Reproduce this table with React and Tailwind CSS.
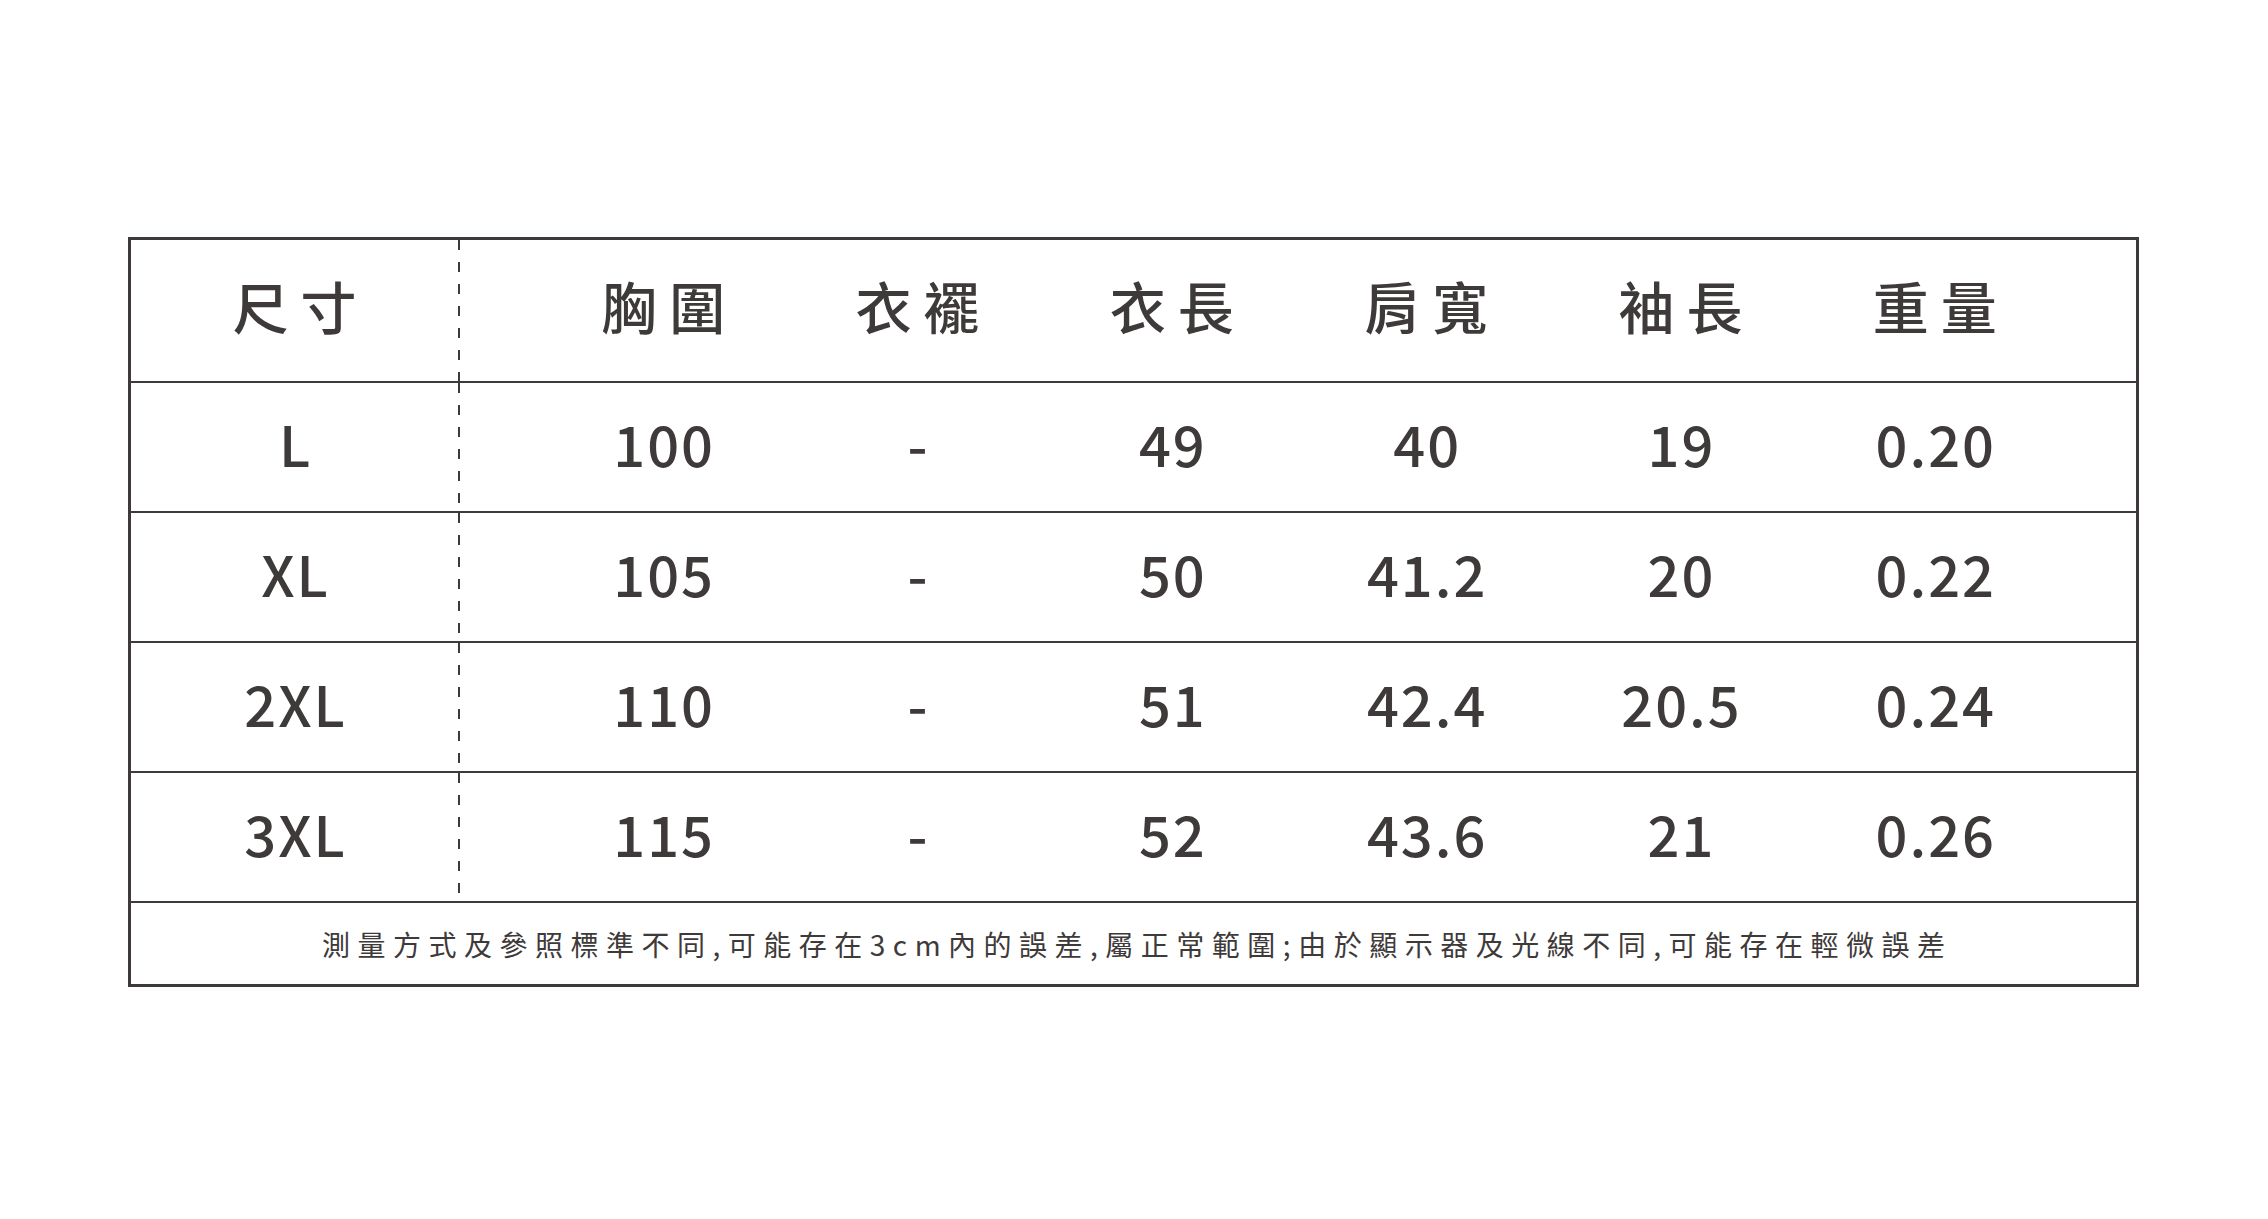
import React from "react";

const headers = ["胸圍", "衣襬", "衣長", "肩寬", "袖長", "重量"];
const rows = [
  ["L", "100", "-", "49", "40", "19", "0.20"],
  ["XL", "105", "-", "50", "41.2", "20", "0.22"],
  ["2XL", "110", "-", "51", "42.4", "20.5", "0.24"],
  ["3XL", "115", "-", "52", "43.6", "21", "0.26"],
];

function Dashed() {
  return (
    <div className="w-[2px] self-stretch bg-[repeating-linear-gradient(to_bottom,#3e3a39_0px,#3e3a39_10px,transparent_10px,transparent_22px)]" />
  );
}

export default function App() {
  return (
    <div className="w-[2268px] h-[1219px] bg-white pt-[237px] pl-[128px] text-[#3e3a39] font-['Noto_Sans_CJK_TC','Noto_Sans_CJK_SC',sans-serif]">
      <div className="w-[2011px] border-[3px] border-[#3e3a39] flex flex-col">
        {/* header */}
        <div className="h-[143px] border-b-2 border-[#3e3a39] flex">
          <div className="w-[327px] pb-[12px] flex items-center justify-center text-[56px] font-medium tracking-[12px]">
            <span className="mr-[-12px]">尺寸</span>
          </div>
          <Dashed />
          <div className="flex-1 pl-[76px] pr-[74px] grid grid-cols-6">
            {headers.map((h) => (
              <div key={h} className="pb-[12px] flex items-center justify-center text-[56px] font-medium tracking-[12px]">
                <span className="mr-[-12px]">{h}</span>
              </div>
            ))}
          </div>
        </div>
        {rows.map((r) => (
          <div key={r[0]} className="h-[130px] border-b-2 border-[#3e3a39] flex">
            <div className="w-[327px] pb-[8px] flex items-center justify-center text-[56px] font-medium tracking-[2px]">
              <span className="mr-[-2px]">{r[0]}</span>
            </div>
            <Dashed />
            <div className="flex-1 pl-[76px] pr-[74px] grid grid-cols-6">
              {r.slice(1).map((v, i) => (
                <div key={i} className="pb-[8px] flex items-center justify-center text-[56px] font-medium tracking-[2px]">
                  <span className="mr-[-2px]">{v}</span>
                </div>
              ))}
            </div>
          </div>
        ))}
        {/* footer */}
        <div className="h-[81px] flex items-center justify-center text-[28px] tracking-[7.5px]">
          <span className="mr-[-7.5px]">
            測量方式及參照標準不同,可能存在3cm內的誤差,屬正常範圍;由於顯示器及光線不同,可能存在輕微誤差
          </span>
        </div>
      </div>
    </div>
  );
}
